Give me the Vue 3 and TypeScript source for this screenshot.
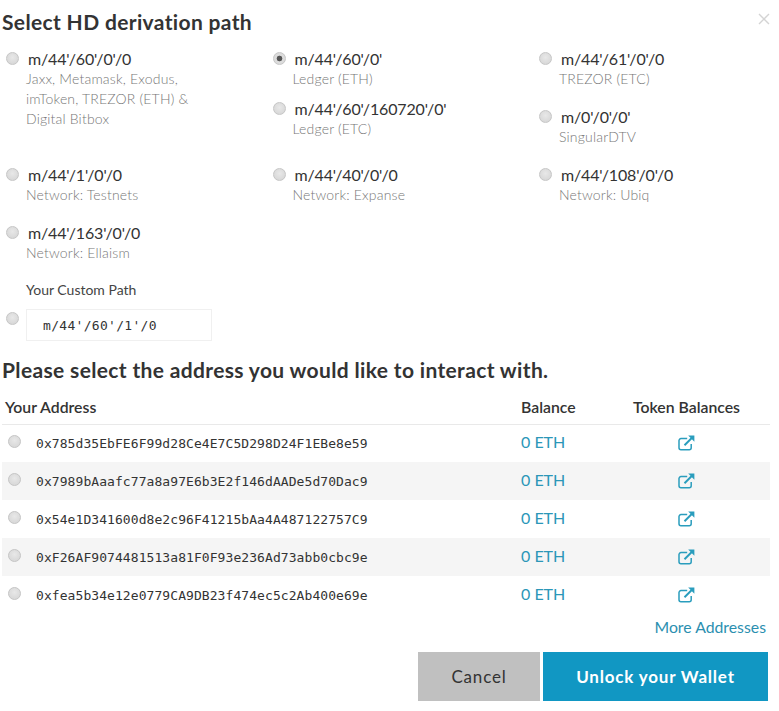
<script setup lang="ts">
interface PathOption { path: string; sub: string[]; checked?: boolean; tight?: boolean }
const columns: PathOption[][] = [
  [{ path: "m/44'/60'/0'/0", sub: ['Jaxx, Metamask, Exodus,', 'imToken, TREZOR (ETH) &', 'Digital Bitbox'] }],
  [
    { path: "m/44'/60'/0'", sub: ['Ledger (ETH)'], checked: true, tight: true },
    { path: "m/44'/60'/160720'/0'", sub: ['Ledger (ETC)'] },
  ],
  [
    { path: "m/44'/61'/0'/0", sub: ['TREZOR (ETC)'] },
    { path: "m/0'/0'/0'", sub: ['SingularDTV'] },
  ],
  [{ path: "m/44'/1'/0'/0", sub: ['Network: Testnets'] }],
  [{ path: "m/44'/40'/0'/0", sub: ['Network: Expanse'] }],
  [{ path: "m/44'/108'/0'/0", sub: ['Network: Ubiq'] }],
  [{ path: "m/44'/163'/0'/0", sub: ['Network: Ellaism'] }],
]
const addresses = [
  '0x785d35EbFE6F99d28Ce4E7C5D298D24F1EBe8e59',
  '0x7989bAaafc77a8a97E6b3E2f146dAADe5d70Dac9',
  '0x54e1D341600d8e2c96F41215bAa4A487122757C9',
  '0xF26AF9074481513a81F0F93e236Ad73abb0cbc9e',
  '0xfea5b34e12e0779CA9DB23f474ec5c2Ab400e69e',
]
</script>

<template>
  <div class="modal">
    <button class="close" type="button" aria-label="Close">
      <svg width="12" height="12" viewBox="0 0 12 12"><path d="M1 1l10 10M11 1L1 11" stroke="#d4d4d4" stroke-width="1.4" fill="none" /></svg>
    </button>
    <h3 class="title">Select HD derivation path</h3>
    <div class="grid">
      <div v-for="(col, i) in columns" :key="i" class="col">
        <label v-for="opt in col" :key="opt.path" class="option" :class="{ tight: opt.tight }">
          <input class="radio" type="radio" name="path" :checked="opt.checked" />
          <span class="text">
            <span class="path">{{ opt.path }}</span>
            <small v-for="line in opt.sub" :key="line" class="sub">{{ line }}</small>
          </span>
        </label>
      </div>
    </div>
    <div class="custom">
      <div class="custom-label">Your Custom Path</div>
      <div class="custom-row">
        <input class="radio" type="radio" name="path" />
        <input class="custom-input" type="text" value="m/44'/60'/1'/0" />
      </div>
    </div>
    <h3 class="title second">Please select the address you would like to interact with.</h3>
    <table class="table">
      <thead>
        <tr><th class="c-addr">Your Address</th><th class="c-bal">Balance</th><th class="c-tok">Token Balances</th></tr>
      </thead>
      <tbody>
        <tr v-for="a in addresses" :key="a">
          <td class="c-addr">
            <div class="addr-cell"><input class="radio" type="radio" name="addr" /><span class="mono">{{ a }}</span></div>
          </td>
          <td class="c-bal link">0 ETH</td>
          <td class="c-tok">
            <svg class="ext" width="17" height="16" viewBox="0 0 17 16" fill="none" stroke="#2a9dbd" stroke-width="1.5">
              <path d="M13.2 9v3.8a2 2 0 0 1-2 2H3a2 2 0 0 1-2-2V5.6a2 2 0 0 1 2-2h6.2" />
              <path d="M6.5 10.2 14 2.8" stroke-width="2" />
              <path d="M10.2 .6h6.2v6.2z" fill="#2a9dbd" stroke="none" />
            </svg>
          </td>
        </tr>
      </tbody>
    </table>
    <div class="more"><a class="link">More Addresses</a></div>
    <div class="buttons">
      <button class="btn cancel" type="button">Cancel</button>
      <button class="btn unlock" type="button">Unlock your Wallet</button>
    </div>
  </div>
</template>

<style scoped>
.modal {
  position: relative;
  width: 779px;
  height: 711px;
  box-sizing: border-box;
  padding: 9px 9px 0 2px;
  background: #fff;
  font-family: Lato, "Open Sans", sans-serif;
  color: #333;
  overflow: hidden;
}
.close {
  position: absolute;
  top: 13px;
  right: 9px;
  padding: 0;
  border: 0;
  background: none;
  line-height: 0;
}
.title {
  margin: 0;
  font-size: 21px;
  line-height: 26px;
  font-weight: 700;
  color: #333;
  letter-spacing: 0.35px;
  height: 26px;
}
.grid {
  display: grid;
  grid-template-columns: 266.5px 266.5px 1fr;
  margin-top: 14px;
}
.col {
  display: flex;
  flex-direction: column;
}
.col:first-child { min-height: 116px; }
.option {
  display: flex;
  align-items: flex-start;
  padding-left: 4px;
  padding-bottom: 18px;
}
.option.tight { padding-bottom: 10px; }
.radio {
  appearance: none;
  flex: none;
  width: 13px;
  height: 13px;
  margin: 3px 7px 0 0;
  border-radius: 50%;
  border: 1px solid #c6c6c6;
  background: radial-gradient(circle at 50% 40%, #e8e8e8, #d3d3d3);
  box-sizing: border-box;
}
.radio:checked {
  background: radial-gradient(circle, #555 0, #555 2.5px, #ddd 3.2px, #d8d8d8 100%);
}
.text {
  display: flex;
  flex-direction: column;
}
.path {
  font-size: 16px;
  line-height: 20px;
  padding-left: 2px;
  color: #333;
  font-weight: 400;
  letter-spacing: -0.15px;
}
.sub {
  font-size: 14px;
  line-height: 20px;
  font-weight: 300;
  color: #777;
  letter-spacing: 0.18px;
}
.custom-label {
  padding-left: 24px;
  margin-top: -1px;
  font-size: 14px;
  line-height: 20px;
  color: #444;
}
.custom-row {
  display: flex;
  align-items: flex-start;
  margin-top: 9px;
  padding-left: 4px;
}
.custom-input {
  width: 186px;
  height: 32px;
  box-sizing: border-box;
  padding: 0 16px;
  border: 1px solid #f0f0f0;
  background: #fff;
  font-family: "DejaVu Sans Mono", monospace;
  font-size: 13px;
  letter-spacing: 0.3px;
  color: #333;
  outline: none;
}
.second { margin-top: 16px; }
.table {
  width: 768px;
  border-collapse: collapse;
  table-layout: fixed;
  margin-top: 9px;
}
th {
  height: 32px;
  padding: 0 0 2px;
  font-size: 15.8px;
  font-weight: 600;
  color: #333;
  text-align: left;
  white-space: nowrap;
  border-bottom: 1px solid #e9e9e9;
  box-sizing: border-box;
}
td {
  height: 38px;
  padding: 0;
  box-sizing: border-box;
}
tbody tr:nth-child(even) td { background: #f5f5f5; }
.c-addr { width: 519px; padding-left: 3px; }
.c-bal { width: 112px; }
.c-tok { text-align: center; padding-right: 30px; }
.addr-cell {
  display: flex;
  align-items: center;
  padding-left: 3px;
}
.addr-cell .radio { margin: -4px 15px 0 0; }
.mono {
  font-family: "DejaVu Sans Mono", monospace;
  font-size: 13px;
  letter-spacing: 0.07px;
  color: #333;
}
.link {
  color: #2b97b8;
  font-size: 16px;
  font-weight: 400;
}
td.link { padding-bottom: 4px; }
.ext { display: block; margin: 0 auto; }
.more {
  text-align: right;
  margin-top: 3px;
  padding-right: 4px;
  font-size: 15.8px;
  line-height: 20px;
}
.more .link { color: #2b8fb0; font-size: inherit; }
.buttons {
  display: flex;
  justify-content: flex-end;
  gap: 3px;
  margin-top: 15px;
  padding-right: 2px;
}
.btn {
  height: 49px;
  border: 0;
  font-family: inherit;
  font-size: 17px;
  letter-spacing: 0.8px;
}
.cancel { width: 122px; background: #c0c0c0; color: #333; }
.unlock { width: 225px; background: #1197c3; color: #fff; font-weight: 700; }
</style>
